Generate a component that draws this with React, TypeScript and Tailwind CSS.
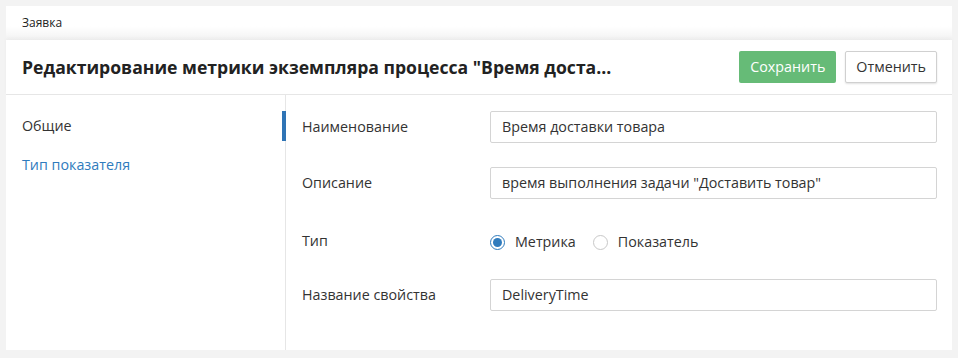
import React from "react";

function Radio({ checked, label }: { checked?: boolean; label: string }) {
  return (
    <label className="flex items-center gap-[10px] mr-[17px]">
      <span
        className={
          checked
            ? "w-[15px] h-[15px] rounded-full border border-[#2f7bbd] flex items-center justify-center bg-white"
            : "w-[15px] h-[15px] rounded-full border border-[#c8c8c8] bg-white"
        }
      >
        {checked && <span className="w-[9px] h-[9px] rounded-full bg-[#2f7bbd]" />}
      </span>
      <span>{label}</span>
    </label>
  );
}

function Input({ value }: { value: string }) {
  return (
    <div className="flex-1 h-[32px] border border-[#d4d4d4] rounded-[2px] px-[11px] flex items-center text-[14.3px] text-[#333]">
      {value}
    </div>
  );
}

export default function App() {
  return (
    <div
      className="w-[958px] h-[358px] bg-[#f3f3f3] p-[6px] text-[#333]"
      style={{ fontFamily: "'Open Sans', 'Noto Sans', sans-serif" }}
    >
      <div className="w-[946px] h-[344px] bg-white flex flex-col">
        <div className="h-[34px] flex items-end pl-[16px] pb-[8px] text-[12px] text-[#222] bg-gradient-to-b from-white from-60% to-[#f2f2f2]">
          Заявка
        </div>
        <div className="h-[55px] mt-0 flex items-center justify-between pl-[16px] pr-[15px] border-b border-[#e6e6e6] shadow-[0_-2px_4px_rgba(0,0,0,0.03)]">
          <div className="text-[17.6px] font-bold text-[#222] mt-[1px]">
            Редактирование метрики экземпляра процесса "Время доста...
          </div>
          <div className="flex items-center gap-[9px] text-[14.3px]">
            <button className="h-[32px] px-[11px] bg-[#66bb77] text-white rounded-[2px]">
              Сохранить
            </button>
            <button className="h-[32px] px-[10px] bg-white border border-[#d0d0d0] text-[#333] rounded-[2px] shadow-[0_1px_2px_rgba(0,0,0,0.12)]">
              Отменить
            </button>
          </div>
        </div>
        <div className="flex flex-1">
          <div className="w-[280px] border-r border-[#e6e6e6] pt-[16px] text-[14.3px]">
            <div className="relative h-[30px] flex items-center pl-[16px] text-[#333]">
              Общие
              <div className="absolute right-[-1px] top-0 w-[4px] h-[30px] bg-[#2f74b5]" />
            </div>
            <div className="h-[30px] mt-[9px] flex items-center pl-[16px] text-[#2f7bbd]">
              Тип показателя
            </div>
          </div>
          <div className="flex-1 pl-[16px] pr-[15px] pt-[16px] text-[14.3px]">
            <div className="flex items-center h-[32px]">
              <div className="w-[188px]">Наименование</div>
              <Input value="Время доставки товара" />
            </div>
            <div className="flex items-center h-[32px] mt-[24px]">
              <div className="w-[188px]">Описание</div>
              <Input value={'время выполнения задачи "Доставить товар"'} />
            </div>
            <div className="flex items-center h-[32px] mt-[27px]">
              <div className="w-[188px] -mt-[3px]">Тип</div>
              <div className="flex items-center">
                <Radio checked label="Метрика" />
                <Radio label="Показатель" />
              </div>
            </div>
            <div className="flex items-center h-[32px] mt-[21px]">
              <div className="w-[188px]">Название свойства</div>
              <Input value="DeliveryTime" />
            </div>
          </div>
        </div>
      </div>
    </div>
  );
}
